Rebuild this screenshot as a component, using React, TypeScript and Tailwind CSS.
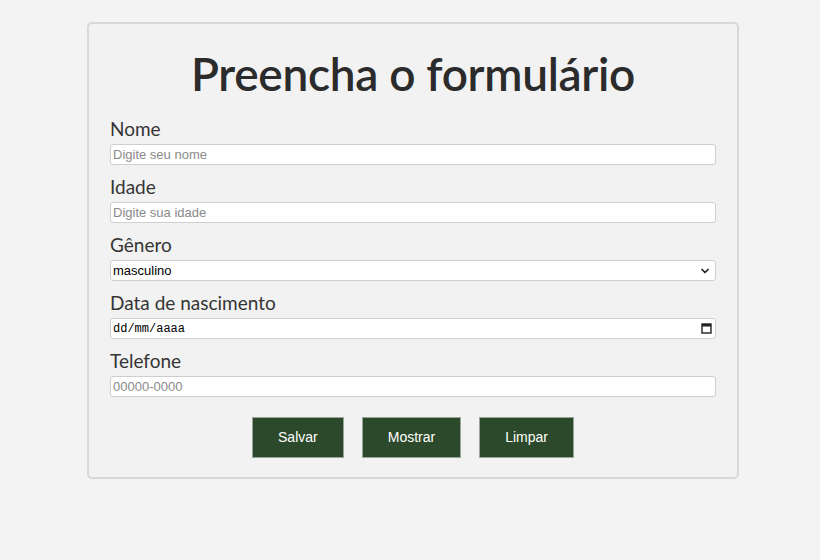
import { ChevronDown } from "lucide-react";

const LABEL = "block h-6 leading-6 text-[19px] text-[#353535] font-['Lato','Open_Sans',sans-serif]";
const BOX =
  "block h-[21px] w-full rounded-[3px] border border-[#cfcfcf] bg-white px-[2px] text-[13px] font-['Liberation_Sans',Arial,sans-serif] outline-none";

function Field({ label, children }: { label: string; children: React.ReactNode }) {
  return (
    <div className="mt-[10px] first:mt-0">
      <label className={LABEL}>{label}</label>
      <div className="mt-[3px]">{children}</div>
    </div>
  );
}

function CalendarIcon() {
  return (
    <svg width="11" height="11" viewBox="0 0 11 11" className="text-[#222]">
      <rect x="1" y="1" width="9" height="9" fill="none" stroke="currentColor" strokeWidth="1.4" />
      <rect x="1" y="1" width="9" height="2.5" fill="currentColor" />
    </svg>
  );
}

export default function App() {
  return (
    <div className="min-h-screen bg-[#f3f3f3] pt-[22px]">
      <div className="ml-[87px] w-[652px] rounded-[5px] border-2 border-[#d8d8d8] bg-[#f2f2f2] px-[21px] pt-[22px] pb-[19px]">
        <h1 className="text-center text-[46px] leading-[55px] font-semibold tracking-[-0.3px] text-[#2b2b2b] font-['Lato','Open_Sans',sans-serif]">
          Preencha o formulário
        </h1>

        <div className="mt-4">
          <Field label="Nome">
            <input className={`${BOX} placeholder:text-[#8a8a8a]`} placeholder="Digite seu nome" />
          </Field>
          <Field label="Idade">
            <input className={`${BOX} placeholder:text-[#8a8a8a]`} placeholder="Digite sua idade" />
          </Field>
          <Field label="Gênero">
            <div className={`${BOX} flex items-center justify-between pr-[4px] text-black`}>
              <span>masculino</span>
              <ChevronDown size={12} strokeWidth={3.5} className="text-[#222]" />
            </div>
          </Field>
          <Field label="Data de nascimento">
            <div className={`${BOX} flex items-center justify-between pr-[3px] text-black`}>
              <span className="font-['Liberation_Mono',monospace] text-[12px]">dd/mm/aaaa</span>
              <CalendarIcon />
            </div>
          </Field>
          <Field label="Telefone">
            <input className={`${BOX} placeholder:text-[#8a8a8a]`} placeholder="00000-0000" />
          </Field>
        </div>

        <div className="mt-[20px] flex justify-center gap-[18px]">
          {["Salvar", "Mostrar", "Limpar"].map((b) => (
            <button
              key={b}
              className="h-[41px] border border-[#9aa59a] bg-[#2c4a2b] px-[25px] text-[14px] text-white font-['Liberation_Sans',Arial,sans-serif]"
            >
              {b}
            </button>
          ))}
        </div>
      </div>
    </div>
  );
}
